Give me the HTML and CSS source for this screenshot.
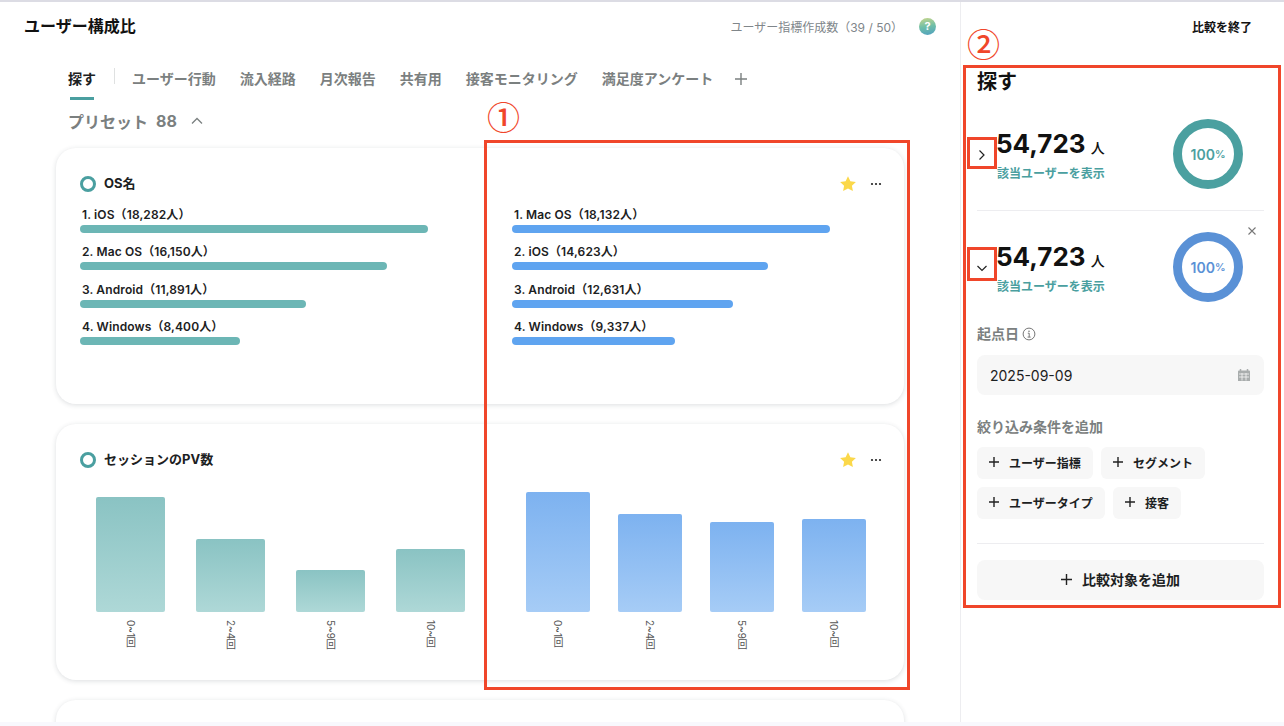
FILE: index.html
```html
<!DOCTYPE html>
<html lang="ja">
<head>
<meta charset="utf-8">
<title>ユーザー構成比</title>
<link rel="stylesheet" href="styles.css">
</head>
<body>
<div class="app">
  <main class="main">
    <header class="top">
      <h1 class="title">ユーザー構成比</h1>
      <div class="quota"><span>ユーザー指標作成数（39 / 50）</span><span class="help">?</span></div>
    </header>
    <nav class="tabs">
      <span class="tab active">探す</span>
      <span class="tab-sep"></span>
      <span class="tab">ユーザー行動</span>
      <span class="tab">流入経路</span>
      <span class="tab">月次報告</span>
      <span class="tab">共有用</span>
      <span class="tab">接客モニタリング</span>
      <span class="tab">満足度アンケート</span>
      <svg class="tab-plus" width="12" height="12" viewBox="0 0 12 12"><path d="M6 0v12M0 6h12" stroke="#7b8080" stroke-width="1.400" fill="none"/></svg>
    </nav>
    <div class="preset">
      <span>プリセット</span><span class="preset-num">88</span>
      <svg class="preset-chev" width="12" height="8" viewBox="0 0 12 8"><path d="M1 6.500 6 1.500l5 5" stroke="#7b8080" stroke-width="1.300" fill="none"/></svg>
    </div>
    <section class="card">
      <div class="col">
        <div class="head"><span class="ring"></span><span class="card-title">OS名</span></div>
        <ul class="rank">
          <li><span class="rank-label">1. iOS（18,282人）</span><span class="rank-bar teal" style="width:348px"></span></li>
          <li><span class="rank-label">2. Mac OS（16,150人）</span><span class="rank-bar teal" style="width:307px"></span></li>
          <li><span class="rank-label">3. Android（11,891人）</span><span class="rank-bar teal" style="width:226px"></span></li>
          <li><span class="rank-label">4. Windows（8,400人）</span><span class="rank-bar teal" style="width:160px"></span></li>
        </ul>
      </div>
      <div class="col col-r">
        <div class="head head-r">
          <svg class="star" width="18" height="18" viewBox="0 0 18 18"><path d="M9 1.200l2.400 5 5.500.7-4 3.800 1 5.400L9 13.500l-4.900 2.600 1-5.400-4-3.800 5.500-.7z" fill="#fbd84a"/></svg>
          <svg class="dots" width="12" height="4" viewBox="0 0 12 4"><circle cx="2" cy="2" r="1.100" fill="#222"/><circle cx="6" cy="2" r="1.100" fill="#222"/><circle cx="10" cy="2" r="1.100" fill="#222"/></svg>
        </div>
        <ul class="rank">
          <li><span class="rank-label">1. Mac OS（18,132人）</span><span class="rank-bar blue" style="width:318px"></span></li>
          <li><span class="rank-label">2. iOS（14,623人）</span><span class="rank-bar blue" style="width:256px"></span></li>
          <li><span class="rank-label">3. Android（12,631人）</span><span class="rank-bar blue" style="width:221px"></span></li>
          <li><span class="rank-label">4. Windows（9,337人）</span><span class="rank-bar blue" style="width:163px"></span></li>
        </ul>
      </div>
    </section>
    <section class="card">
      <div class="col">
        <div class="head"><span class="ring"></span><span class="card-title">セッションのPV数</span></div>
        <div class="chart chart-l">
          <div class="item"><div class="slot"><div class="bar bar-teal" style="height:115px"></div></div><span class="tick">0~1回</span></div>
          <div class="item"><div class="slot"><div class="bar bar-teal" style="height:73px"></div></div><span class="tick">2~4回</span></div>
          <div class="item"><div class="slot"><div class="bar bar-teal" style="height:42px"></div></div><span class="tick">5~9回</span></div>
          <div class="item"><div class="slot"><div class="bar bar-teal" style="height:63px"></div></div><span class="tick">10~回</span></div>
        </div>
      </div>
      <div class="col col-r">
        <div class="head head-r">
          <svg class="star" width="18" height="18" viewBox="0 0 18 18"><path d="M9 1.200l2.400 5 5.500.7-4 3.800 1 5.400L9 13.500l-4.900 2.600 1-5.400-4-3.800 5.500-.7z" fill="#fbd84a"/></svg>
          <svg class="dots" width="12" height="4" viewBox="0 0 12 4"><circle cx="2" cy="2" r="1.100" fill="#222"/><circle cx="6" cy="2" r="1.100" fill="#222"/><circle cx="10" cy="2" r="1.100" fill="#222"/></svg>
        </div>
        <div class="chart chart-r">
          <div class="item"><div class="slot"><div class="bar bar-blue" style="height:120px"></div></div><span class="tick">0~1回</span></div>
          <div class="item"><div class="slot"><div class="bar bar-blue" style="height:98px"></div></div><span class="tick">2~4回</span></div>
          <div class="item"><div class="slot"><div class="bar bar-blue" style="height:90px"></div></div><span class="tick">5~9回</span></div>
          <div class="item"><div class="slot"><div class="bar bar-blue" style="height:93px"></div></div><span class="tick">10~回</span></div>
        </div>
      </div>
    </section>
    <section class="card"></section>
  </main>
  <aside class="side">
    <div class="side-top">比較を終了</div>
    <h2 class="side-title">探す</h2>
    <div class="stat">
      <div class="stat-left">
        <svg class="chev" width="20" height="20" viewBox="0 0 20 20"><path d="M7.500 5.500 12 10l-4.500 4.500" stroke="#222" stroke-width="1.200" fill="none"/></svg>
        <div>
          <div class="num">54,723<span class="unit">人</span></div>
          <div class="link">該当ユーザーを表示</div>
        </div>
      </div>
      <div class="donut donut-teal">100<small>%</small></div>
    </div>
    <div class="stat stat-2">
      <svg class="close" width="10" height="10" viewBox="0 0 10 10"><path d="M1.500 1.500l7 7M8.500 1.500l-7 7" stroke="#777" stroke-width="1.100" fill="none"/></svg>
      <div class="stat-left">
        <svg class="chev" width="20" height="20" viewBox="0 0 20 20"><path d="M5.500 8 10 12.500 14.500 8" stroke="#222" stroke-width="1.200" fill="none"/></svg>
        <div>
          <div class="num">54,723<span class="unit">人</span></div>
          <div class="link">該当ユーザーを表示</div>
        </div>
      </div>
      <div class="donut donut-blue">100<small>%</small></div>
    </div>
    <div class="label label-date">起点日
      <svg width="14" height="14" viewBox="0 0 14 14"><circle cx="7" cy="7" r="5.900" stroke="#777" stroke-width="1" fill="none"/><circle cx="7" cy="4.300" r=".8" fill="#777"/><path d="M5.800 6.200H7.200V10M5.600 10.100H8.600" stroke="#777" stroke-width="1" fill="none"/></svg>
    </div>
    <div class="date">
      <span>2025-09-09</span>
      <svg width="14" height="14" viewBox="0 0 14 14"><path d="M1 3.500a1 1 0 0 1 1-1h10a1 1 0 0 1 1 1V13H1z" fill="#a9adad"/><path d="M3.500 1v2.500M10.500 1v2.500" stroke="#a9adad" stroke-width="1.500"/><path d="M2 6h10M2 9h10M5 5v7.500M9 5v7.500" stroke="#f7f7f7" stroke-width=".8"/></svg>
    </div>
    <div class="label label-filter">絞り込み条件を追加</div>
    <div class="chips">
      <span class="chip chip-a"><svg class="plus" width="10" height="10" viewBox="0 0 10 10"><path d="M5 0v10M0 5h10" stroke="#222" stroke-width="1.400"/></svg>ユーザー指標</span>
      <span class="chip chip-b"><svg class="plus" width="10" height="10" viewBox="0 0 10 10"><path d="M5 0v10M0 5h10" stroke="#222" stroke-width="1.400"/></svg>セグメント</span>
      <span class="chip chip-c"><svg class="plus" width="10" height="10" viewBox="0 0 10 10"><path d="M5 0v10M0 5h10" stroke="#222" stroke-width="1.400"/></svg>ユーザータイプ</span>
      <span class="chip chip-d"><svg class="plus" width="10" height="10" viewBox="0 0 10 10"><path d="M5 0v10M0 5h10" stroke="#222" stroke-width="1.400"/></svg>接客</span>
    </div>
    <hr class="rule">
    <div class="add"><svg class="plus-lg" width="11" height="11" viewBox="0 0 11 11"><path d="M5.500 0v11M0 5.500h11" stroke="#222" stroke-width="1.400"/></svg>比較対象を追加</div>
  </aside>
</div>
<div class="strip"></div>
<div class="mark mark-1"></div>
<div class="mark mark-2"></div>
<div class="mark mark-3"></div>
<div class="mark mark-4"></div>
<span class="num-mark num-mark-1">①</span>
<span class="num-mark num-mark-2">②</span>
</body>
</html>
```
FILE: styles.css
```css
* { box-sizing: border-box; }
html, body { margin: 0; padding: 0; }
body {
  width: 1284px;
  height: 726px;
  overflow: hidden;
  position: relative;
  background: #fff;
  color: #1c2122;
  font-family: Inter, "Noto Sans CJK JP", sans-serif;
  display: flex;
  flex-direction: column;
  border-top: 2px solid #dcdce4;
}
.app { display: flex; height: 720px; overflow: hidden; }
.strip { height: 4px; background: #f8f8fd; }

.main { width: 960px; flex: none; overflow: hidden; }
.top {
  height: 48px;
  display: flex;
  align-items: center;
  justify-content: space-between;
  padding: 0 24px 0 24px;
}
.title { margin: 0; font-size: 16px; font-weight: 700; line-height: 24px; color: #111; }
.quota { display: flex; align-items: center; gap: 16px; font-size: 12px; color: #80868a; }
.help {
  width: 17px; height: 17px; border-radius: 50%;
  display: flex; align-items: center; justify-content: center;
  color: #fff; font-size: 11px; font-weight: 700;
  background: linear-gradient(170deg, #c8d68a 0%, #6fbfa8 50%, #4f9fc0 100%);
}
.tabs { display: flex; align-items: flex-start; gap: 24px; padding: 8px 0 0 68px; height: 50px; position: relative; }
.tab { font-size: 14px; font-weight: 700; line-height: 20px; padding-top: 11px; color: #7b8080; white-space: nowrap; }
.tab.active { color: #1c2122; width: 27px; margin-right: -5px; }
.tab.active::after { content: ""; display: block; width: 24px; height: 3px; margin: 8px 0 0 2px; background: #4a9fa0; }
.tab-sep { width: 1px; height: 16px; margin-top: 10px; background: #dfe1e1; margin-right: -7px; }
.tab-plus { margin: 15px 0 0 -2px; }
.preset {
  display: flex; align-items: center;
  height: 24px; margin: 9px 0 15px 68px;
  font-size: 16px; font-weight: 700; color: #7b8080;
}
.preset-num { margin-left: 8px; }
.preset-chev { margin-left: 14px; }
.card {
  display: flex;
  gap: 24px;
  width: 848px;
  height: 256px;
  margin: 0 0 20px 56px;
  padding: 24px;
  background: #fff;
  border-radius: 20px;
  box-shadow: 0 1px 5px rgba(40, 50, 60, .16);
}
.col { flex: 1; min-width: 0; }
.head { display: flex; align-items: center; height: 24px; }
.head-r { justify-content: flex-end; margin-right: -2px; }
.col-r .rank { padding-left: 20px; }
.ring { width: 16px; height: 16px; border-radius: 50%; border: 3.500px solid #4a9fa0; margin-right: 8px; }
.card-title { font-size: 13px; font-weight: 700; line-height: 22px; padding-bottom: 2px; color: #1c2122; }
.star { margin-right: 13px; }
.rank { list-style: none; margin: 11px 0 0; padding: 0; display: flex; flex-direction: column; gap: 11.300px; }
.rank li { display: flex; flex-direction: column; gap: 2px; }
.rank-label { font-size: 12px; font-weight: 600; line-height: 16px; padding-left: 2px; letter-spacing: .12px; color: #1c2122; }
.rank-bar { display: block; height: 8px; border-radius: 4px; }
.teal { background: #6cb6b5; }
.blue { background: #5fa4f0; }
.chart { display: flex; margin-top: 16px; }
.chart-l { gap: 31px; padding-left: 16px; }
.chart-r { gap: 28px; padding-left: 34px; }
.item { display: flex; flex-direction: column; align-items: center; }
.slot { height: 124px; display: flex; align-items: flex-end; }
.bar { border-radius: 2px; }
.chart-l .bar { width: 69px; }
.chart-r .bar { width: 64px; }
.bar-teal { background: linear-gradient(180deg, #8ac3c3, #aed8d7); }
.bar-blue { background: linear-gradient(180deg, #7db2f0, #a6ccf6); }
.tick { writing-mode: vertical-rl; font-size: 10px; line-height: 10px; color: #555; margin-top: 8px; }

.side { width: 324px; flex: none; border-left: 1px solid #ededf0; padding: 0 20px 0 16px; }
.side-top { height: 48px; display: flex; align-items: center; justify-content: flex-end; padding-right: 12px; font-size: 12px; font-weight: 700; color: #111; }
.side-title { margin: 18px 0 0; font-size: 20px; font-weight: 700; line-height: 28px; color: #111; }
.stat { display: flex; justify-content: space-between; align-items: flex-start; padding: 23px 21px 21px 0; position: relative; }
.stat-2 { border-top: 1px solid #ededf0; padding: 21px 21px 0 0; }
.stat-left { display: flex; align-items: center; margin-top: 8px; }
.chev { margin: 0 5px 0 -5px; flex: none; }
.num { font-size: 26px; font-weight: 700; line-height: 34px; margin-left: -1px; color: #111; }
.unit { font-size: 14px; font-weight: 500; margin-left: 5px; }
.link { font-size: 12px; font-weight: 600; line-height: 16px; margin-top: 1px; color: #4a9fa0; }
.donut {
  width: 70px; height: 70px; border-radius: 50%; border: 9px solid;
  display: flex; align-items: center; justify-content: center;
  font-size: 14px; font-weight: 600;
}
.donut small { font-size: 10.500px; font-weight: 600; }
.donut-teal { border-color: #4ba0a0; color: #4ba0a0; }
.donut-blue { border-color: #5a91d6; color: #5a91d6; }
.close { position: absolute; top: 15px; right: 7px; }
.label { font-size: 14px; font-weight: 600; line-height: 20px; color: #7b8080; display: flex; align-items: center; gap: 3px; }
.label-date { margin-top: 22px; }
.label-filter { margin-top: 22px; }
.date {
  height: 40px; margin-top: 11px; border-radius: 8px; background: #f7f7f7;
  display: flex; align-items: center; justify-content: space-between;
  padding: 0 13px; font-size: 14px; color: #1c2122;
}
.chips { display: flex; flex-wrap: wrap; gap: 8px; margin-top: 10px; }
.chip {
  height: 32px; border-radius: 6px; background: #f7f7f7;
  display: flex; align-items: center; justify-content: center;
  padding-bottom: 2px;
  font-size: 12px; font-weight: 700; color: #1c2122; white-space: nowrap;
}
.plus { margin-right: 10px; }
.chip-a { width: 116px; }
.chip-b { width: 104px; }
.chip-c { width: 128px; }
.chip-d { width: 68px; }
.rule { height: 1px; margin: 24px 0 16px; border: 0; background: #ededf0; }
.add {
  height: 40px; border-radius: 8px; background: #f7f7f7;
  display: flex; align-items: center; justify-content: center;
  padding-bottom: 2px;
  font-size: 14px; font-weight: 700; color: #1c2122;
}
.plus-lg { margin-right: 10px; }

.mark { position: absolute; border: 3px solid #f0462a; }
.mark-1 { left: 484px; top: 138px; width: 426px; height: 550px; }
.mark-2 { left: 963px; top: 63px; width: 318px; height: 543px; }
.mark-3 { left: 967px; top: 135px; width: 30px; height: 32px; }
.mark-4 { left: 967px; top: 245px; width: 30px; height: 34px; }
.num-mark { position: absolute; font-family: "Noto Sans CJK JP", sans-serif; font-size: 33px; font-weight: 500; line-height: 32px; color: #f0462a; }
.num-mark-1 { left: 487px; top: 98px; }
.num-mark-2 { left: 967px; top: 25px; }
```
